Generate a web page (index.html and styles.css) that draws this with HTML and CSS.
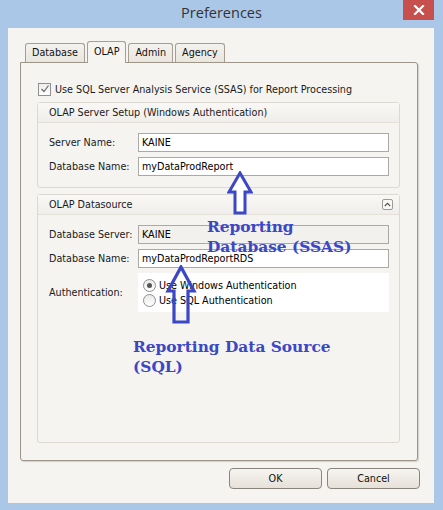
FILE: index.html
```html
<!DOCTYPE html>
<html lang="en">
<head>
  <meta charset="UTF-8">
  <meta name="viewport" content="width=device-width, initial-scale=1.0">
  <title>Preferences</title>
  <link rel="stylesheet" href="styles.css">
</head>
<body>
  <div class="window">
    <div class="titlebar">
      <span class="title">Preferences</span>
      <div class="close-btn">
        <svg width="12" height="10" viewBox="0 0 12 10">
          <path d="M2 1 L10 9 M10 1 L2 9" stroke="#ffffff" stroke-width="2.2" stroke-linecap="square"/>
        </svg>
      </div>
    </div>

    <div class="client">
      <div class="tabs">
        <div class="tab">Database</div>
        <div class="tab active">OLAP</div>
        <div class="tab">Admin</div>
        <div class="tab">Agency</div>
      </div>

      <div class="panel">
        <div class="check-row">
          <span class="checkbox">
            <svg width="10" height="10" viewBox="0 0 10 10">
              <path d="M1.5 5 L4 7.5 L8.5 1.5" fill="none" stroke="#6b6b6b" stroke-width="1.2"/>
            </svg>
          </span>
          <span>Use SQL Server Analysis Service (SSAS) for Report Processing</span>
        </div>

        <div class="group">
          <div class="group-head">OLAP Server Setup (Windows Authentication)</div>
          <div class="group-body">
            <div class="field">
              <span class="label">Server Name:</span>
              <div class="input">KAINE</div>
            </div>
            <div class="field">
              <span class="label">Database Name:</span>
              <div class="input">myDataProdReport</div>
            </div>
          </div>
        </div>

        <div class="group group-fill">
          <div class="group-head">
            <span>OLAP Datasource</span>
            <span class="collapse-btn">
              <svg width="7" height="5" viewBox="0 0 7 5">
                <path d="M0.8 4 L3.5 1.3 L6.2 4" fill="none" stroke="#555555" stroke-width="1.1"/>
              </svg>
            </span>
          </div>
          <div class="group-body">
            <div class="field">
              <span class="label">Database Server:</span>
              <div class="input readonly">KAINE</div>
            </div>
            <div class="field">
              <span class="label">Database Name:</span>
              <div class="input">myDataProdReportRDS</div>
            </div>
            <div class="field">
              <span class="label">Authentication:</span>
              <div class="radio-box">
                <div class="radio-row"><span class="radio checked"></span>Use Windows Authentication</div>
                <div class="radio-row"><span class="radio"></span>Use SQL Authentication</div>
              </div>
            </div>
          </div>
        </div>
      </div>

      <div class="buttons">
        <div class="btn">OK</div>
        <div class="btn">Cancel</div>
      </div>
    </div>

    <!-- annotations drawn over the dialog -->
    <svg class="arrow arrow-ssas" width="26" height="44" viewBox="0 0 26 44">
      <path d="M13 2 L24 21 L18 21 L18 42 L8 42 L8 21 L2 21 Z" fill="#ffffff" stroke="#3b47c4" stroke-width="3" stroke-linejoin="miter"/>
    </svg>
    <svg class="arrow arrow-sql" width="32" height="60" viewBox="0 0 32 60">
      <path d="M16 2 L29 26 L23 26 L23 57 L9 57 L9 26 L3 26 Z" fill="none" stroke="#3b47c4" stroke-width="3.2" stroke-linejoin="miter"/>
    </svg>
    <div class="note note-ssas">Reporting<br>Database (SSAS)</div>
    <div class="note note-sql">Reporting Data Source<br>(SQL)</div>
  </div>
</body>
</html>
```

FILE: styles.css
```css
/* Dialog */
body {
  margin: 0;
  padding: 0;
  background-color: #abc7e7;
  font-family: "DejaVu Sans Condensed", "DejaVu Sans", sans-serif;
  font-stretch: condensed;
  font-size: 10.7px;
  color: #000000;
}

.window {
  position: relative;
  width: 443px;
  height: 510px;
}

.titlebar {
  height: 28px;
  display: flex;
  justify-content: center;
  align-items: center;
}

.title {
  font-family: "Open Sans", "Noto Sans", sans-serif;
  font-stretch: normal;
  font-size: 14.5px;
  color: #333333;
  margin-top: -3px;
}

.close-btn {
  position: absolute;
  top: 0;
  right: 9px;
  width: 31px;
  height: 20px;
  background-color: #c74f4d;
  display: flex;
  justify-content: center;
  align-items: center;
}

.client {
  margin: 0 9px 0 8px;
  height: 475px;
  background-color: #f5f4f1;
  padding: 13px 0 0 12px;
  box-sizing: border-box;
}

/* Tabs */
.tabs {
  display: flex;
  align-items: flex-end;
  padding-left: 5px;
  height: 21px;
}

.tab {
  height: 19px;
  padding: 0 6px;
  margin-right: 2px;
  box-sizing: border-box;
  border: 1px solid #a59e91;
  border-bottom: none;
  border-radius: 3px 3px 0 0;
  background: linear-gradient(#f4f2ee, #e9e6df);
  line-height: 18px;
  color: #111111;
}

.tab.active {
  height: 22px;
  margin-bottom: -1px;
  background: #f5f4f1;
  position: relative;
  z-index: 1;
  line-height: 20px;
}

.panel {
  width: 398px;
  height: 399px;
  box-sizing: border-box;
  border: 1px solid #9c9588;
  border-radius: 0 3px 3px 3px;
  box-shadow: 1px 1px 1px rgba(0, 0, 0, 0.15);
  padding: 19px 17px 17px 16px;
  display: flex;
  flex-direction: column;
}

.check-row {
  display: flex;
  align-items: center;
  height: 14px;
  padding-left: 1px;
  margin-bottom: 6px;
  color: #1a1a1a;
}

.checkbox {
  width: 11px;
  height: 11px;
  border: 1px solid #8e8f8f;
  background: linear-gradient(#eeeeee, #ffffff);
  display: flex;
  justify-content: center;
  align-items: center;
  margin-right: 4px;
}

/* Group boxes */
.group {
  border: 1px solid #dcd9d3;
  border-radius: 3px;
  margin-bottom: 6px;
}

.group-fill {
  flex: 1;
  margin-bottom: 0;
}

.group-head {
  height: 19px;
  border-bottom: 1px solid #e4e1db;
  background: linear-gradient(#f9f8f6, #f0eeea);
  padding: 0 6px 0 11px;
  display: flex;
  justify-content: space-between;
  align-items: center;
  color: #1a1a1a;
}

.collapse-btn {
  width: 9px;
  height: 9px;
  border: 1px solid #9b9a97;
  border-radius: 2px;
  background: #f8f8f7;
  display: flex;
  justify-content: center;
  align-items: center;
}

.group-body {
  padding: 10px 10px 11px 11px;
  display: flex;
  flex-direction: column;
  gap: 5px;
}

.field {
  display: flex;
  align-items: center;
}

.label {
  width: 89px;
  flex-shrink: 0;
  white-space: nowrap;
  color: #1a1a1a;
}

.input {
  flex: 1;
  height: 19px;
  box-sizing: border-box;
  border: 1px solid #aba9a5;
  background-color: #ffffff;
  padding-left: 3px;
  line-height: 17px;
}

.input.readonly {
  background-color: #f2f1ee;
}

.radio-box {
  flex: 1;
  height: 39px;
  background-color: #ffffff;
  padding: 5px 0 0 5px;
  box-sizing: border-box;
}

.radio-row {
  display: flex;
  align-items: center;
  height: 15px;
}

.radio {
  width: 11px;
  height: 11px;
  border: 1px solid #8e8f8f;
  border-radius: 50%;
  background: linear-gradient(#e9e9e9, #ffffff);
  margin-right: 3px;
  display: flex;
  justify-content: center;
  align-items: center;
}

.radio.checked::after {
  content: "";
  width: 5px;
  height: 5px;
  border-radius: 50%;
  background-color: #555555;
}

/* Buttons */
.buttons {
  display: flex;
  justify-content: flex-end;
  gap: 5px;
  padding: 7px 14px 0 0;
}

.btn {
  width: 93px;
  height: 21px;
  box-sizing: border-box;
  border: 1px solid #8a857c;
  border-radius: 4px;
  background: linear-gradient(#f7f5f1, #e6e1d8);
  text-align: center;
  line-height: 19px;
  color: #111111;
}

/* Annotations */
.arrow {
  position: absolute;
}

.arrow-ssas {
  left: 227px;
  top: 171px;
}

.arrow-sql {
  left: 165px;
  top: 265px;
}

.note {
  position: absolute;
  font-family: "DejaVu Serif", serif;
  font-stretch: normal;
  font-weight: bold;
  font-size: 15.4px;
  line-height: 20px;
  color: #3b47c4;
}

.note-ssas {
  left: 207px;
  top: 217px;
}

.note-sql {
  left: 133px;
  top: 337px;
}
```
